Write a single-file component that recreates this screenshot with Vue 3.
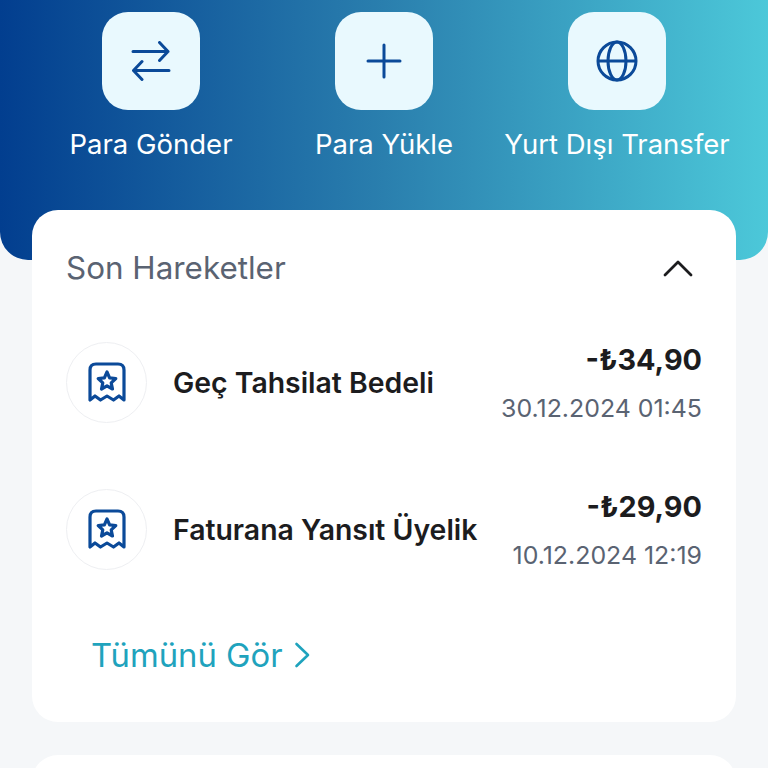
<script setup>
const actions = [
  { label: 'Para Gönder', icon: 'swap' },
  { label: 'Para Yükle', icon: 'plus' },
  { label: 'Yurt Dışı Transfer', icon: 'globe' },
]

const moves = [
  { title: 'Geç Tahsilat Bedeli', amount: '-₺34,90', date: '30.12.2024 01:45' },
  { title: 'Faturana Yansıt Üyelik', amount: '-₺29,90', date: '10.12.2024 12:19' },
]
</script>

<template>
  <div class="page">
    <header class="hero">
      <div class="actions">
        <div v-for="a in actions" :key="a.label" class="action">
          <div class="tile">
            <svg v-if="a.icon === 'swap'" width="40" height="40" viewBox="0 0 40 40" fill="none" stroke="#0b4a99" stroke-width="3" stroke-linecap="round" stroke-linejoin="round">
              <path d="M2 10.500H37M28.500 1.500L37 10.500L28.500 19.500" />
              <path d="M38 29.500H2.500M11 20.500L2.500 29.500L11 38.500" />
            </svg>
            <svg v-else-if="a.icon === 'plus'" width="40" height="40" viewBox="0 0 40 40" fill="none" stroke="#0b4a99" stroke-width="3" stroke-linecap="round">
              <path d="M20 4V36M4 20H36" />
            </svg>
            <svg v-else width="42" height="42" viewBox="0 0 42 42" fill="none" stroke="#0b4a99" stroke-width="3">
              <circle cx="21" cy="21" r="19" />
              <ellipse cx="21" cy="21" rx="9" ry="19" />
              <path d="M2 21H40" />
            </svg>
          </div>
          <span class="action-label">{{ a.label }}</span>
        </div>
      </div>
    </header>

    <main class="content">
      <section class="card">
        <div class="card-head">
          <h2>Son Hareketler</h2>
          <svg width="32" height="20" viewBox="0 0 32 20" fill="none" stroke="#1c1c1e" stroke-width="2.800" stroke-linecap="round" stroke-linejoin="round">
            <path d="M3 17L16 4L29 17" />
          </svg>
        </div>

        <div v-for="m in moves" :key="m.date" class="move">
          <div class="move-icon">
            <svg width="38" height="42" viewBox="0 0 38 42" fill="none" stroke="#0b4a99" stroke-width="3.200" stroke-linejoin="round" stroke-linecap="round">
              <path d="M2 38V8C2 4 4 2 8 2H30C34 2 36 4 36 8V38L31 34L25.500 38L19 34L12.500 38L7 34L2 38Z" />
              <path d="M19 10L21.600 15.800L27.800 16.500L23.200 20.800L24.500 27L19 23.800L13.500 27L14.800 20.800L10.200 16.500L16.400 15.800Z" />
            </svg>
          </div>
          <div class="move-title">{{ m.title }}</div>
          <div class="move-side">
            <div class="move-amount">{{ m.amount }}</div>
            <div class="move-date">{{ m.date }}</div>
          </div>
        </div>

        <a class="see-all">
          Tümünü Gör
          <svg width="16" height="26" viewBox="0 0 16 26" fill="none" stroke="#1fa3bd" stroke-width="2.600" stroke-linecap="round" stroke-linejoin="round">
            <path d="M2.500 2L14 13L2.500 24" />
          </svg>
        </a>
      </section>

      <section class="card card-next"></section>
    </main>
  </div>
</template>

<style>
html, body {
  margin: 0;
  background: #f5f7f9;
}
</style>

<style scoped>
.page {
  height: 768px;
  overflow: hidden;
  background: #f5f7f9;
  font-family: Inter, "Liberation Sans", sans-serif;
}

.hero {
  height: 248px;
  padding-top: 12px;
  background: linear-gradient(90deg, #023e8f 0%, #2a7fae 50%, #4cc8d9 100%);
  border-radius: 0 0 28px 28px;
}

.actions {
  display: grid;
  grid-template-columns: repeat(3, 233px);
  justify-content: center;
}

.action {
  display: flex;
  flex-direction: column;
  align-items: center;
}

.tile {
  width: 98px;
  height: 98px;
  border-radius: 26px;
  background: #e9f9fe;
  display: flex;
  align-items: center;
  justify-content: center;
}

.action-label {
  margin-top: 17px;
  font-size: 27.500px;
  line-height: 34px;
  color: #fff;
  white-space: nowrap;
}

.content {
  display: flex;
  flex-direction: column;
  gap: 33px;
  margin-top: -50px;
  padding: 0 32px;
}

.card {
  background: #fff;
  border-radius: 26px;
  height: 512px;
  box-sizing: border-box;
  padding: 38px 34px 0;
}

.card-next {
  height: 100px;
}

.card-head {
  height: 40px;
  margin-bottom: 21px;
  display: flex;
  align-items: center;
  justify-content: space-between;
  padding-right: 8px;
}

h2 {
  margin: 0;
  font-size: 31.400px;
  font-weight: 400;
  color: #5a6372;
}

.move {
  height: 147px;
  display: flex;
  align-items: center;
}

.move-icon {
  width: 81px;
  height: 81px;
  box-sizing: border-box;
  border: 1px solid #eeeff2;
  border-radius: 50%;
  display: flex;
  align-items: center;
  justify-content: center;
  flex: none;
}

.move-title {
  margin-left: 26px;
  font-size: 28.400px;
  font-weight: 600;
  color: #1c1c1e;
  white-space: nowrap;
}

.move-side {
  margin-left: auto;
  text-align: right;
}

.move-amount {
  font-size: 28.800px;
  font-weight: 700;
  color: #1c1c1e;
  line-height: 36px;
}

.move-date {
  margin-top: 15px;
  font-size: 24.900px;
  color: #5a6372;
  line-height: 30px;
}

.see-all {
  display: flex;
  align-items: center;
  gap: 11px;
  margin: 30px 0 0 25px;
  height: 44px;
  font-size: 32.800px;
  color: #1fa3bd;
}
</style>
